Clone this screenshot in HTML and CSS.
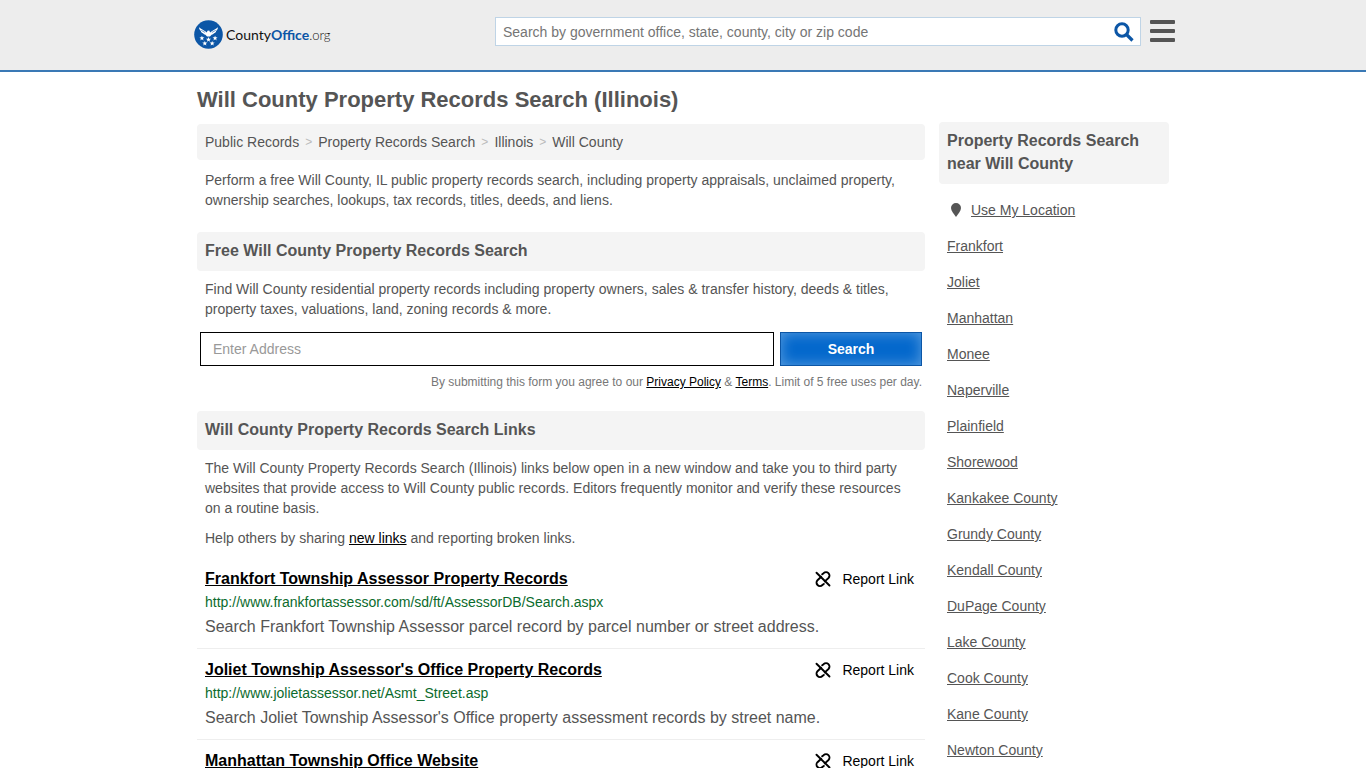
FILE: index.html
```html
<!DOCTYPE html>
<html lang="en">
<head>
<meta charset="utf-8">
<meta name="viewport" content="width=device-width, initial-scale=1">
<title>Will County Property Records Search (Illinois)</title>
<link rel="stylesheet" href="styles.css">
</head>
<body>
<svg class="defs" aria-hidden="true">
  <symbol id="broken-link" viewBox="0 0 16 16">
    <g fill="none" stroke="currentColor" stroke-width="1.900" stroke-linecap="round">
      <path d="M7.200 3.300 8.600 2.200a3.400 3.400 0 0 1 4.900 4.800L9.800 10.400"/>
      <path d="M8.800 12.900 7.400 14a3.400 3.400 0 0 1-4.900-4.800L6.200 5.800"/>
      <path d="M1.500 1.700l13 12.800"/>
    </g>
  </symbol>
</svg>
<header class="site-header">
  <div class="header-inner">
    <a class="logo" href="#" aria-label="CountyOffice.org">
      <svg class="logo-mark" viewBox="0 0 30 30" aria-hidden="true">
        <circle cx="15" cy="15" r="14.800" fill="#0c56a6"/>
        <g fill="#fff">
          <path d="M5.200 7.500c2.300 2.300 4.600 2.600 6.800 4.300l1.300 1.100.6-1.700 1.900-.3.900 2 1.300-1.100c2.200-1.700 4.500-2 6.800-4.300-.1 2-.9 3-1.900 3.800-.2 1.400-1.200 2.100-2.200 2.500-.6 1-1.500 1.400-2.500 1.500L16.500 17H13.500l-1.700-1.700c-1-.1-1.900-.5-2.500-1.500-1-.4-2-1.100-2.200-2.500-1-.8-1.800-1.800-1.900-3.800z"/>
          <path id="star" d="M8.200 16.200l.7 1.700 1.900.1-1.500 1.200.5 1.900-1.600-1.100-1.600 1.100.5-1.900-1.500-1.200 1.900-.1z"/>
          <use href="#star" x="6.800" y="1.500"/><use href="#star" x="13.600"/>
          <use href="#star" x="3" y="5.400"/><use href="#star" x="10.600" y="5.400"/>
        </g>
        <path d="M7.500 10.700l4 2.200M22.500 10.700l-4 2.200" stroke="#0c56a6" stroke-width=".6"/>
      </svg>
      <span class="logo-text">County<b>Office</b><span class="logo-tld">.org</span></span>
    </a>
    <form class="site-search">
      <input type="search" aria-label="Search offices" placeholder="Search by government office, state, county, city or zip code">
      <button type="button" aria-label="Search">
        <svg viewBox="0 0 20 20" fill="none" stroke="#0c56a6" aria-hidden="true"><circle cx="8" cy="8" r="6.200" stroke-width="3"/><path d="M12 12l6.500 6.500" stroke-width="3.200"/></svg>
      </button>
    </form>
    <button class="menu" type="button" aria-label="Menu"><span></span><span></span><span></span></button>
  </div>
</header>
<div class="page">
  <main class="content">
    <h1>Will County Property Records Search (Illinois)</h1>
    <nav class="crumbs" aria-label="Breadcrumb"><a href="#">Public Records</a><i>&gt;</i><a href="#">Property Records Search</a><i>&gt;</i><a href="#">Illinois</a><i>&gt;</i><a href="#">Will County</a></nav>
    <p>Perform a free Will County, IL public property records search, including property appraisals, unclaimed property, ownership searches, lookups, tax records, titles, deeds, and liens.</p>
    <h2>Free Will County Property Records Search</h2>
    <p>Find Will County residential property records including property owners, sales &amp; transfer history, deeds &amp; titles, property taxes, valuations, land, zoning records &amp; more.</p>
    <form class="address">
      <input type="text" aria-label="Address" placeholder="Enter Address">
      <button type="button">Search</button>
    </form>
    <p class="note">By submitting this form you agree to our <a href="#">Privacy Policy</a> &amp; <a href="#">Terms</a>. Limit of 5 free uses per day.</p>
    <h2>Will County Property Records Search Links</h2>
    <p>The Will County Property Records Search (Illinois) links below open in a new window and take you to third party websites that provide access to Will County public records. Editors frequently monitor and verify these resources on a routine basis.</p>
    <p>Help others by sharing <a href="#">new links</a> and reporting broken links.</p>
    <ul class="results">
      <li>
        <div class="result-head"><h3><a href="#">Frankfort Township Assessor Property Records</a></h3><button type="button" class="report"><svg aria-hidden="true"><use href="#broken-link"/></svg>Report Link</button></div>
        <div class="url">http://www.frankfortassessor.com/sd/ft/AssessorDB/Search.aspx</div>
        <div class="desc">Search Frankfort Township Assessor parcel record by parcel number or street address.</div>
      </li>
      <li>
        <div class="result-head"><h3><a href="#">Joliet Township Assessor's Office Property Records</a></h3><button type="button" class="report"><svg aria-hidden="true"><use href="#broken-link"/></svg>Report Link</button></div>
        <div class="url">http://www.jolietassessor.net/Asmt_Street.asp</div>
        <div class="desc">Search Joliet Township Assessor's Office property assessment records by street name.</div>
      </li>
      <li>
        <div class="result-head"><h3><a href="#">Manhattan Township Office Website</a></h3><button type="button" class="report"><svg aria-hidden="true"><use href="#broken-link"/></svg>Report Link</button></div>
      </li>
    </ul>
  </main>
  <aside class="nearby">
    <h2>Property Records Search near Will County</h2>
    <ul>
      <li><svg class="pin" viewBox="0 0 12 14" aria-hidden="true"><path d="M6 0a5 5 0 0 1 5 5c0 3-3 6-5 9C4 11 1 8 1 5a5 5 0 0 1 5-5z" fill="currentColor"/></svg><a href="#">Use My Location</a></li>
      <li><a href="#">Frankfort</a></li>
      <li><a href="#">Joliet</a></li>
      <li><a href="#">Manhattan</a></li>
      <li><a href="#">Monee</a></li>
      <li><a href="#">Naperville</a></li>
      <li><a href="#">Plainfield</a></li>
      <li><a href="#">Shorewood</a></li>
      <li><a href="#">Kankakee County</a></li>
      <li><a href="#">Grundy County</a></li>
      <li><a href="#">Kendall County</a></li>
      <li><a href="#">DuPage County</a></li>
      <li><a href="#">Lake County</a></li>
      <li><a href="#">Cook County</a></li>
      <li><a href="#">Kane County</a></li>
      <li><a href="#">Newton County</a></li>
    </ul>
  </aside>
</div>
</body>
</html>
```
FILE: styles.css
```css
* { box-sizing: border-box; }
html { scrollbar-width: none; }
body {
  margin: 0;
  font: 14px/20px "Liberation Sans", Arial, sans-serif;
  color: #555;
  background: #fff;
}
h1, h2, h3, p, ul { margin: 0; padding: 0; }
ul { list-style: none; }
button, input { font: inherit; border-radius: 0; }
button { cursor: pointer; }
.defs { display: none; }

.site-header { background: #ededed; border-bottom: 2px solid #3a79b5; }
.header-inner {
  display: flex;
  align-items: flex-start;
  max-width: 984px;
  height: 70px;
  margin: 0 auto;
  padding-top: 17px;
}
.logo { display: flex; align-items: center; gap: 3px; padding: 3px 0 0 3px; color: #111; text-decoration: none; }
.logo-mark { width: 29px; height: 29px; }
.logo-text { font: 14px/20px Lato, sans-serif; }
.logo-text b { color: #0c56a6; }
.logo-tld { font-size: 13px; font-weight: 300; }
.site-search {
  display: flex;
  flex: 0 1 646px;
  height: 29px;
  margin-left: auto;
  border: 1px solid #bfd4e6;
  background: #fff;
}
.site-search input { flex: 1; min-width: 0; padding: 0 7px; border: 0; background: none; outline: 0; }
.site-search input::placeholder { color: #757575; opacity: 1; }
.site-search button { display: flex; align-items: center; padding: 0 6px 0 0; border: 0; background: none; }
.site-search svg { width: 20px; height: 20px; }
.menu {
  display: flex;
  flex-direction: column;
  gap: 5px;
  width: 25px;
  margin: 3px 0 0 9px;
  padding: 0;
  border: 0;
  background: none;
}
.menu span { width: 25px; height: 4px; border-radius: 1px; background: #555; }

.page { display: flex; gap: 14px; max-width: 972px; margin: 0 auto; }
.content { flex: 1; min-width: 0; }
h1 { padding: 14px 0 10px; font-size: 22px; line-height: 28px; }
.crumbs { display: flex; flex-wrap: wrap; padding: 8px; border-radius: 4px; background: #f4f4f4; }
.crumbs a { color: #555; text-decoration: none; }
.crumbs i { margin: 0 6px; font-style: normal; font-size: 12px; color: #bbb; }
.content > p { padding: 0 8px; margin-top: 10px; }
.content > p a { color: #000; }
h2 { font-size: 16px; line-height: 23px; padding: 8px; border-radius: 4px; background: #f4f4f4; }
.content h2 { margin-top: 22px; padding: 7px 8px 9px; }
.content h2 + p { margin-top: 8px; }

.address { display: flex; gap: 6px; margin: 13px 3px 0; }
.address input { flex: 1; min-width: 0; height: 34px; padding: 0 12px; border: 1px solid #000; }
.address input::placeholder { color: #999; opacity: 1; }
.address button {
  width: 142px;
  height: 34px;
  border: 1px solid #0c56a6;
  background: #0468cc;
  box-shadow: inset 0 0 14px #5b9edf;
  color: #fff;
  font-weight: bold;
}
.content > .note { margin-top: 6px; padding: 0 3px; font-size: 12px; text-align: right; color: #777; }
.content .note + h2 { margin-top: 19px; }

.results { margin-top: 10px; }
.results li { padding: 9px 8px 10px; border-bottom: 1px solid #eee; }
.result-head { display: flex; justify-content: space-between; align-items: center; }
h3 { font-size: 16px; line-height: 23px; }
h3 a { color: #000; }
.report { display: flex; align-items: center; gap: 11px; padding: 0 3px; border: 0; background: none; color: #000; }
.report svg { width: 16px; height: 16px; }
.url { line-height: 25px; color: #0b6b2d; }
.desc { font-size: 16px; line-height: 23px; }

.nearby { flex: 0 0 230px; margin-top: 50px; }
.nearby h2 { padding: 7px 8px 9px; }
.nearby ul { margin-top: 8px; }
.nearby li { display: flex; align-items: center; gap: 9px; padding: 8px; }
.nearby a { color: #555; }
.pin { width: 12px; height: 14px; margin-left: 3px; }
```
